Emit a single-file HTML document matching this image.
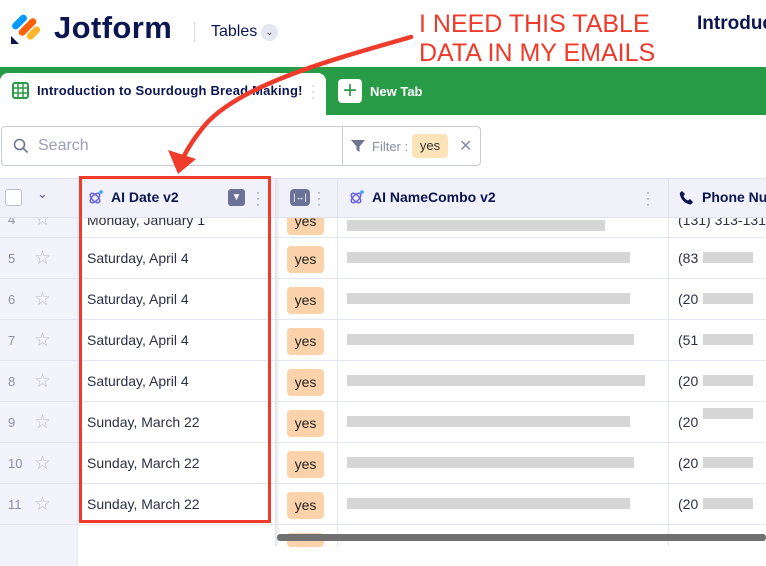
<!DOCTYPE html>
<html><head><meta charset="utf-8"><style>
*{margin:0;padding:0;box-sizing:border-box}
body{width:766px;height:546px;overflow:hidden;background:#fff;font-family:"Liberation Sans",sans-serif;position:relative;color:#0a1551}
.a{position:absolute;white-space:nowrap}
.row{position:absolute;left:0;width:766px;height:41px;border-bottom:1px solid #e3e5f0;white-space:nowrap}
.num{position:absolute;left:0;width:78px;height:100%;background:#f3f4fb;border-right:1px solid #e3e5f0}
.num span{position:absolute;left:8px;top:13px;font-size:13px;color:#8a8fa8}
.num .st{position:absolute;left:34px;top:9px;font-size:19px;color:#b8bccd}
.date{position:absolute;left:87px;top:12px;font-size:14px;color:#2a2f45}
.yes{position:absolute;left:287px;top:8px;width:37px;height:27px;background:#fbd2a9;border-radius:4px;font-size:14px;color:#222;text-align:center;line-height:27px}
.blur{position:absolute;left:347px;top:14px;height:11px;background:#d6d6d6}
.ph{position:absolute;left:678px;top:12px;font-size:14px;color:#2a2f45}
.pb{position:absolute;top:14px;height:11px;background:#d6d6d6}
</style></head><body>
<svg class="a" style="left:10px;top:13px" width="32" height="32" viewBox="0 0 32 32">
<rect x="6" y="0" width="7" height="18" rx="3.5" transform="rotate(45 9.5 9)" fill="#0099ff"/>
<rect x="14" y="3" width="7" height="22" rx="3.5" transform="rotate(45 17.5 14)" fill="#ff6100"/>
<rect x="20" y="12" width="7" height="16" rx="3.5" transform="rotate(45 23.5 20)" fill="#ffb629"/>
<path d="M1 23 L1 31 L9 31 Z" fill="#0a1551"/>
</svg>
<div class="a" style="left:54px;top:10px;font-size:31px;font-weight:bold;letter-spacing:0.4px">Jotform</div>
<div class="a" style="left:194px;top:22px;width:1px;height:20px;background:#d8dae5"></div>
<div class="a" style="left:211px;top:23px;font-size:16px">Tables</div>
<div class="a" style="left:261px;top:24px;width:17px;height:17px;border-radius:50%;background:#e4e6f1;font-size:10px;text-align:center;line-height:17px;color:#555">&#8964;</div>
<div class="a" style="left:419px;top:10px;font-size:25px;color:#ee3b2b;line-height:29px">I NEED THIS TABLE<br>DATA IN MY EMAILS</div>
<div class="a" style="left:697px;top:13px;font-size:19px;font-weight:bold">Introduc</div>
<div class="a" style="left:0;top:67px;width:766px;height:48px;background:#289b47"></div>
<div class="a" style="left:0;top:73px;width:326px;height:42px;background:#fff;border-radius:8px 8px 0 0"></div>
<svg class="a" style="left:12px;top:82px" width="17" height="17" viewBox="0 0 17 17"><rect x="1" y="1" width="15" height="15" rx="2" fill="none" stroke="#2a9b47" stroke-width="2"/><path d="M1 6H16M1 11H16M6 1V16M11 1V16" stroke="#2a9b47" stroke-width="1.5"/></svg>
<div class="a" style="left:37px;top:83px;font-size:13px;font-weight:bold;color:#0a1551;letter-spacing:0.2px">Introduction to Sourdough Bread Making!</div>
<div class="a" style="left:311px;top:82px;color:#b0b4c8;font-size:12px;line-height:6px">·<br>·<br>·</div>
<div class="a" style="left:338px;top:79px;width:24px;height:24px;background:#fff;border-radius:4px;color:#289b47;font-size:24px;text-align:center;line-height:23px">+</div>
<div class="a" style="left:370px;top:84px;font-size:13px;font-weight:bold;color:#fff">New Tab</div>
<div class="a" style="left:1px;top:126px;width:480px;height:40px;border:1px solid #c8cbd9;border-radius:4px"></div>
<div class="a" style="left:342px;top:126px;width:1px;height:40px;background:#c8cbd9"></div>
<svg class="a" style="left:13px;top:138px" width="16" height="16" viewBox="0 0 16 16"><circle cx="6.5" cy="6.5" r="5" fill="none" stroke="#6f7590" stroke-width="1.6"/><path d="M10 10L14.5 14.5" stroke="#6f7590" stroke-width="1.6"/></svg>
<div class="a" style="left:38px;top:137px;font-size:16px;color:#9a9fb5">Search</div>
<svg class="a" style="left:351px;top:139px" width="14" height="14" viewBox="0 0 14 14"><path d="M0 1H14L8.5 7.5V13L5.5 11V7.5Z" fill="#6f7590"/></svg>
<div class="a" style="left:372px;top:139px;font-size:13px;color:#8a8fa8">Filter :</div>
<div class="a" style="left:412px;top:134px;width:36px;height:24px;background:#fde3b8;border-radius:4px;font-size:13px;color:#333;text-align:center;line-height:24px">yes</div>
<div class="a" style="left:459px;top:136px;font-size:16px;color:#8a8fa8">✕</div>
<div class="a" style="left:0;top:178px;width:766px;height:40px;background:#f1f2f9;border-top:1px solid #dfe1ee;border-bottom:1px solid #dfe1ee"></div>
<div class="a" style="left:5px;top:189px;width:17px;height:17px;border:1.5px solid #b8bccd;border-radius:3px;background:#fff"></div>
<div class="a" style="left:37px;top:186px;font-size:13px;color:#5a6080">&#8964;</div>
<svg class="a" style="left:88px;top:190px" width="15" height="15" viewBox="0 0 15 15"><ellipse cx="7" cy="8" rx="6" ry="3" transform="rotate(45 7 8)" fill="none" stroke="#6b66e0" stroke-width="1.5"/><ellipse cx="7" cy="8" rx="6" ry="3" transform="rotate(-45 7 8)" fill="none" stroke="#6b66e0" stroke-width="1.5"/><circle cx="13" cy="2" r="1.8" fill="#2fa7ff"/></svg>
<div class="a" style="left:111px;top:189px;font-size:14px;font-weight:bold">AI Date v2</div>
<div class="a" style="left:228px;top:189px;width:17px;height:17px;background:#6c7297;border-radius:3px;color:#fff;font-size:10px;text-align:center;line-height:17px">▼</div>
<div class="a" style="left:256px;top:189px;color:#6c7297;font-size:12px;line-height:6px">·<br>·<br>·</div>
<div class="a" style="left:290px;top:189px;width:20px;height:17px;background:#6c7297;border-radius:4px;color:#fff;font-size:9px;text-align:center;line-height:17px">|↔|</div>
<div class="a" style="left:317px;top:189px;color:#6c7297;font-size:12px;line-height:6px">·<br>·<br>·</div>
<div class="a" style="left:337px;top:178px;width:1px;height:40px;background:#dfe1ee"></div>
<svg class="a" style="left:349px;top:190px" width="15" height="15" viewBox="0 0 15 15"><ellipse cx="7" cy="8" rx="6" ry="3" transform="rotate(45 7 8)" fill="none" stroke="#6b66e0" stroke-width="1.5"/><ellipse cx="7" cy="8" rx="6" ry="3" transform="rotate(-45 7 8)" fill="none" stroke="#6b66e0" stroke-width="1.5"/><circle cx="13" cy="2" r="1.8" fill="#2fa7ff"/></svg>
<div class="a" style="left:372px;top:189px;font-size:14px;font-weight:bold">AI NameCombo v2</div>
<div class="a" style="left:646px;top:189px;color:#6c7297;font-size:12px;line-height:6px">·<br>·<br>·</div>
<div class="a" style="left:668px;top:178px;width:1px;height:40px;background:#dfe1ee"></div>
<svg class="a" style="left:679px;top:190px" width="15" height="15" viewBox="0 0 15 15"><path d="M3 1 L6 4 L4.5 6 C5.5 8.5 7 9.8 9 10.5 L11 9 L14 12 L12 14.5 C6 14 1 9 0.8 3 Z" fill="#0a1551"/></svg>
<div class="a" style="left:702px;top:189px;font-size:14px;font-weight:bold">Phone Nu</div>

<div class="row" style="top:218px;height:20px;overflow:hidden"><div class="num"><span style="top:-6px">4</span><span class="st" style="top:-10px">☆</span></div><div class="date" style="top:-6px">Monday, January 1</div><div class="yes" style="top:-10px">yes</div><div class="blur" style="top:2px;width:258px"></div><div class="ph" style="top:-6px">(131) 313-1313</div></div>
<div class="row" style="top:238px"><div class="num"><span>5</span><span class="st">☆</span></div><div class="date">Saturday, April 4</div><div class="yes">yes</div><div class="blur" style="width:283px"></div><div class="ph">(83</div><div class="pb" style="left:703px;width:50px"></div></div>
<div class="row" style="top:279px"><div class="num"><span>6</span><span class="st">☆</span></div><div class="date">Saturday, April 4</div><div class="yes">yes</div><div class="blur" style="width:283px"></div><div class="ph">(20</div><div class="pb" style="left:703px;width:50px"></div></div>
<div class="row" style="top:320px"><div class="num"><span>7</span><span class="st">☆</span></div><div class="date">Saturday, April 4</div><div class="yes">yes</div><div class="blur" style="width:287px"></div><div class="ph">(51</div><div class="pb" style="left:703px;width:50px"></div></div>
<div class="row" style="top:361px"><div class="num"><span>8</span><span class="st">☆</span></div><div class="date">Saturday, April 4</div><div class="yes">yes</div><div class="blur" style="width:298px"></div><div class="ph">(20</div><div class="pb" style="left:703px;width:50px"></div></div>
<div class="row" style="top:402px"><div class="num"><span>9</span><span class="st">☆</span></div><div class="date">Sunday, March 22</div><div class="yes">yes</div><div class="blur" style="width:283px"></div><div class="ph">(20</div><div class="pb" style="left:703px;width:50px;top:6px"></div></div>
<div class="row" style="top:443px"><div class="num"><span>10</span><span class="st">☆</span></div><div class="date">Sunday, March 22</div><div class="yes">yes</div><div class="blur" style="width:287px"></div><div class="ph">(20</div><div class="pb" style="left:703px;width:50px"></div></div>
<div class="row" style="top:484px"><div class="num"><span>11</span><span class="st">☆</span></div><div class="date">Sunday, March 22</div><div class="yes">yes</div><div class="blur" style="width:283px"></div><div class="ph">(20</div><div class="pb" style="left:703px;width:50px"></div></div>
<div class="row" style="top:525px;border:none"><div class="num"></div><div class="yes" style="top:8px;height:14px"></div></div>
<div class="a" style="left:337px;top:218px;width:1px;height:328px;background:#e3e5f0"></div>
<div class="a" style="left:668px;top:218px;width:1px;height:328px;background:#e3e5f0"></div>
<div class="a" style="left:275px;top:178px;width:5px;height:368px;background:linear-gradient(90deg,#e0e2ec,#fff0)"></div>
<div class="a" style="left:277px;top:534px;width:489px;height:7px;background:#707070;border-radius:3px"></div>
<div class="a" style="left:79px;top:176px;width:192px;height:347px;border:3px solid #f03a2a"></div>
<svg class="a" style="left:0;top:0" width="766" height="546">
<path d="M411 37 C330 60 240 85 205 125 C195 137 188 148 184 156" fill="none" stroke="#ee3b2b" stroke-width="4.5" stroke-linecap="round"/>
<path d="M168 150 L196 159 L178 174 Z" fill="#ee3b2b"/>
</svg>
</body></html>
